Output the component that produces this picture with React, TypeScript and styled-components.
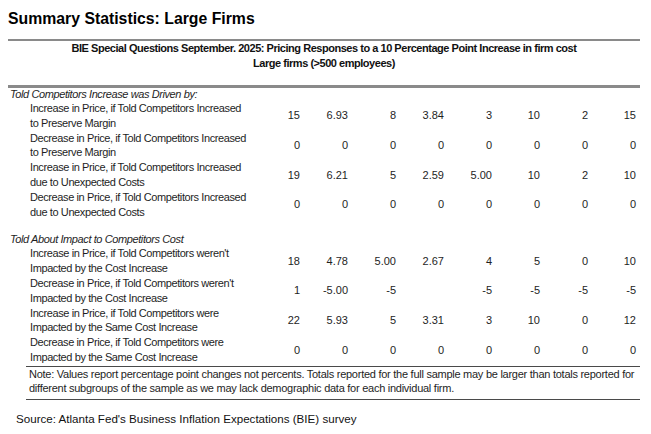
import React from "react";
import styled, { createGlobalStyle } from "styled-components";

const Global = createGlobalStyle`
  html, body { margin: 0; padding: 0; background: #ffffff; }
  body { color: #000; }
`;

const Page = styled.div`
  padding: 8px 11px 0 8px;
  width: 632px;
`;

const Title = styled.h1`
  margin: 0;
  padding-top: 1px;
  font: bold 15.8px/20px "Liberation Sans", Arial, sans-serif;
  color: #000;
`;

const Table = styled.div`
  margin-top: 10px;
  font-family: "Liberation Sans", Arial, sans-serif;
  font-size: 11px;
  letter-spacing: -0.4px;
  color: #1e1e1e;
`;

const Header = styled.div`
  border-top: 2px solid #8a8a8a;
  border-bottom: 3px solid #8a8a8a;
  padding: 0 0 14px;
  text-align: center;
  font-weight: bold;
  letter-spacing: -0.47px;
  line-height: 15px;
  color: #111;
`;

const GroupTitle = styled.div<{ $spaced?: boolean }>`
  font-style: italic;
  line-height: 13px;
  padding-left: 2px;
  margin-top: ${(p) => (p.$spaced ? "14px" : "0")};
`;

const Row = styled.div`
  display: grid;
  grid-template-columns: 244px repeat(8, 48px);
  align-items: center;
  line-height: 14.8px;
`;

const Label = styled.div`
  padding-left: 22px;
  white-space: nowrap;
`;

const Value = styled.div`
  text-align: right;
  letter-spacing: 0;
`;

const Note = styled.div`
  margin-left: 18px;
  margin-top: 1px;
  border-top: 1.5px solid #4a4a4a;
  border-bottom: 1.5px solid #4a4a4a;
  padding: 0 0 4px 3px;
  line-height: 14px;
  letter-spacing: -0.26px;
  white-space: nowrap;
`;

const Source = styled.div`
  margin: 12px 0 0 8px;
  font: 11.6px/14px "Liberation Sans", Arial, sans-serif;
  color: #111;
`;

type RowData = { label: [string, string]; values: string[] };

const groups: { title: string; rows: RowData[] }[] = [
  {
    title: "Told Competitors Increase was Driven by:",
    rows: [
      {
        label: ["Increase in Price, if Told Competitors Increased", "to Preserve Margin"],
        values: ["15", "6.93", "8", "3.84", "3", "10", "2", "15"],
      },
      {
        label: ["Decrease in Price, if Told Competitors Increased", "to Preserve Margin"],
        values: ["0", "0", "0", "0", "0", "0", "0", "0"],
      },
      {
        label: ["Increase in Price, if Told Competitors Increased", "due to Unexpected Costs"],
        values: ["19", "6.21", "5", "2.59", "5.00", "10", "2", "10"],
      },
      {
        label: ["Decrease in Price, if Told Competitors Increased", "due to Unexpected Costs"],
        values: ["0", "0", "0", "0", "0", "0", "0", "0"],
      },
    ],
  },
  {
    title: "Told About Impact to Competitors Cost",
    rows: [
      {
        label: ["Increase in Price, if Told Competitors weren't", "Impacted by the Cost Increase"],
        values: ["18", "4.78", "5.00", "2.67", "4", "5", "0", "10"],
      },
      {
        label: ["Decrease in Price, if Told Competitors weren't", "Impacted by the Cost Increase"],
        values: ["1", "-5.00", "-5", "", "-5", "-5", "-5", "-5"],
      },
      {
        label: ["Increase in Price, if Told Competitors were", "Impacted by the Same Cost Increase"],
        values: ["22", "5.93", "5", "3.31", "3", "10", "0", "12"],
      },
      {
        label: ["Decrease in Price, if Told Competitors were", "Impacted by the Same Cost Increase"],
        values: ["0", "0", "0", "0", "0", "0", "0", "0"],
      },
    ],
  },
];

export default function App() {
  return (
    <>
      <Global />
      <Page>
        <Title>Summary Statistics: Large Firms</Title>
        <Table>
          <Header>
            <div>
              BIE Special Questions September. 2025: Pricing Responses to a 10 Percentage Point Increase in firm cost
            </div>
            <div>Large firms (&gt;500 employees)</div>
          </Header>
          {groups.map((g, gi) => (
            <React.Fragment key={g.title}>
              <GroupTitle $spaced={gi > 0}>{g.title}</GroupTitle>
              {g.rows.map((r, ri) => (
                <Row key={ri}>
                  <Label>
                    {r.label[0]}
                    <br />
                    {r.label[1]}
                  </Label>
                  {r.values.map((v, vi) => (
                    <Value key={vi}>{v}</Value>
                  ))}
                </Row>
              ))}
            </React.Fragment>
          ))}
          <Note>
            Note: Values report percentage point changes not percents. Totals reported for the full sample may be larger
            than totals reported for
            <br />
            different subgroups of the sample as we may lack demographic data for each individual firm.
          </Note>
        </Table>
        <Source>Source: Atlanta Fed's Business Inflation Expectations (BIE) survey</Source>
      </Page>
    </>
  );
}
